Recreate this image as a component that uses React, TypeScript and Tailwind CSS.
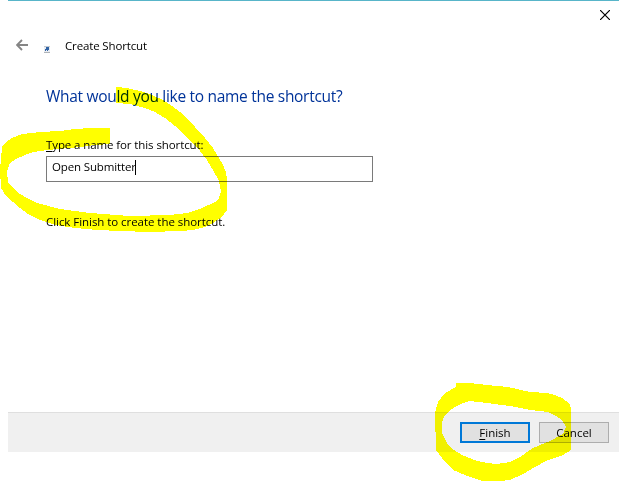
function Highlights() {
  return (
    <svg
      className="pointer-events-none absolute inset-0 mix-blend-multiply"
      width="619"
      height="481"
      viewBox="0 0 619 481"
      fill="#ffff00"
      shapeRendering="crispEdges"
      aria-hidden="true"
    >
      <path d="M116 87L127 88L140 91L152 95L163 100L172 106L180 112L195 127L205 138L213 148L222 163L226 172L227 180V210L222 217L213 223L205 227L193 230L180 231L150 232L120 231L98 230L75 228L56 225L40 220L28 214L20 208L6 196L1 188L0 170L2 147L6 142L12 138L22 134L40 132L60 131L75 129L90 128H110V144L95 145L80 147L47 150L33 152L25 155L16 159L10 163L7 172L8 182L17 192L27 198L37 203L60 209L90 213L130 216L170 215L187 213L200 209L215 202L219 198L221 192L219 181L213 170L207 160L200 151L185 135L175 126L165 118L155 112L145 108L130 104L116 103Z" />
      <path
        fillRule="evenodd"
        d="M456 383H470L487 385L508 387L530 392L547 393L555 395L562 398L569 403L571 408V450L563 455L548 460L535 467L523 474L510 480L500 481H483L470 477L453 470L447 464L442 458L436 450L435 413L438 402L445 393L456 387ZM470 401L463 403L455 407L448 412L444 417L442 422V433L448 445L454 450L462 455L477 461L487 463L497 464L510 462L520 457L533 448L550 441L563 434L566 427L562 420L556 416L548 412L530 410L510 406L487 403Z"
      />
    </svg>
  );
}

export default function App() {
  return (
    <div className="relative h-[481px] w-[619px] overflow-hidden bg-white pl-2 font-['Open_Sans','Noto_Sans',sans-serif] text-[11.5px] leading-4 text-black">
      <main className="flex h-[452px] flex-col border-t border-[#58b5c9]">
        <div className="flex h-7 justify-end pt-[9px] pr-[9px]">
          <button aria-label="Close" className="h-[10px] w-[10px]">
            <svg width="10" height="10" viewBox="0 0 10 10" fill="none" stroke="#000" strokeWidth="1.2">
              <path d="M0 0l10 10M10 0L0 10" />
            </svg>
          </button>
        </div>
        <header className="flex h-8 items-center pl-2">
          <svg width="12" height="12" viewBox="0 0 12 12" fill="none" stroke="#858585" strokeWidth="1.9">
            <path d="M12 6H1M6 1L1 6l5 5" />
          </svg>
          <svg className="mt-[9px] ml-4" width="6" height="7" viewBox="0 0 6 7" shapeRendering="crispEdges">
            <path fill="#c3c9d0" d="M0 0h6v1H0z" />
            <path fill="#e8ecf1" d="M0 1h6v5H0z" />
            <path fill="#2f62a5" d="M2 1h3v3H4v1H3V4H2v1H1V3h1z" />
            <path fill="#b0b4b9" d="M0 6h6v1H0z" />
          </svg>
          <h1 className="mt-px ml-[15px] whitespace-nowrap tracking-[-0.14px]">Create Shortcut</h1>
        </header>
        <section className="flex flex-1 flex-col pl-[38px]">
          <h2 className="mt-[23px] h-6 whitespace-nowrap text-[15.5px] leading-6 tracking-[-0.3px] text-[#003399]">
            What would you like to name the shortcut?
          </h2>
          <label htmlFor="name" className="mt-[29px] h-4 whitespace-nowrap tracking-[-0.1px]">
            <span className="underline underline-offset-2">T</span>ype a name for this shortcut:
          </label>
          <div id="name" className="mt-[3px] flex h-[26px] w-[327px] border border-[#7a7a7a] pt-[2px] pl-[5px]">
            <span className="whitespace-nowrap tracking-[-0.14px]">Open Submitter</span>
            <span className="mt-[1px] -ml-px h-[15px] w-px bg-black" />
          </div>
          <p className="mt-8 whitespace-nowrap tracking-[-0.05px]">Click Finish to create the shortcut.</p>
        </section>
        <footer className="flex h-10 w-[611px] justify-end gap-[9px] border-t border-[#dfdfdf] bg-[#f0f0f0] pt-[9px] pr-[10px]">
          <button className="h-[21px] w-[70px] border-2 border-[#0078d7] bg-[#e1e1e1] leading-[17px]">
            <span className="underline underline-offset-2">F</span>inish
          </button>
          <button className="h-[21px] w-[70px] border border-[#adadad] bg-[#e1e1e1] leading-[19px]">
            Cancel
          </button>
        </footer>
      </main>
      <Highlights />
    </div>
  );
}
